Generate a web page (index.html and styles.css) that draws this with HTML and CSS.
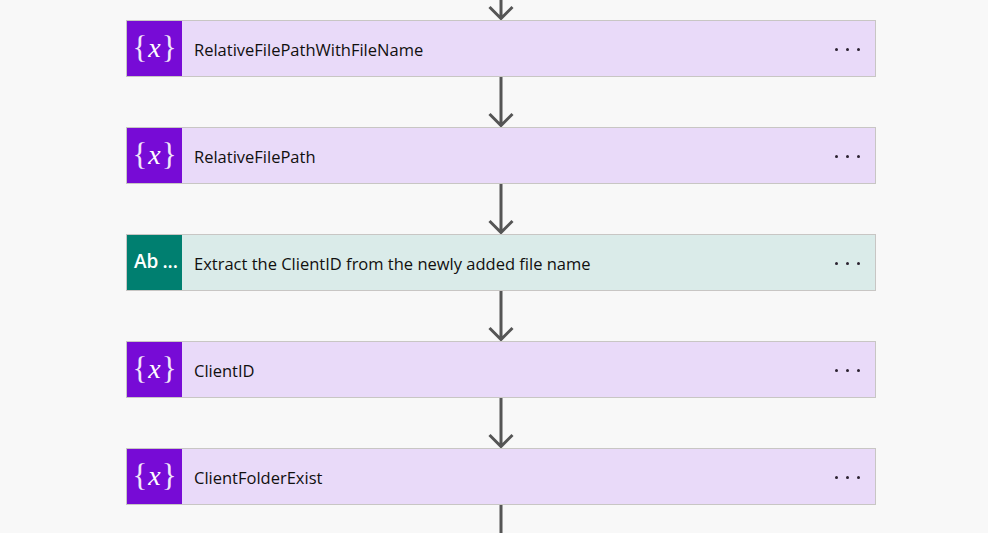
FILE: index.html
```html
<!DOCTYPE html>
<html>
    <head>
        <title>Flow steps</title>
        <link rel="stylesheet" href="styles.css">
    </head>
    <body>
        <div class="flow">
            <svg class="arrow" width="30" height="50" viewBox="0 0 30 50"><path d="M15 0V48M3.500 37L15 48.500L26.500 37"/></svg>

            <div class="card card-var">
                <div class="card-icon"><span class="brace">{</span><span class="var-x">x</span><span class="brace">}</span></div>
                <div class="card-title">RelativeFilePathWithFileName</div>
                <div class="card-menu"><i></i><i></i><i></i></div>
            </div>
            <svg class="arrow" width="30" height="50" viewBox="0 0 30 50"><path d="M15 0V48M3.500 37L15 48.500L26.500 37"/></svg>

            <div class="card card-var">
                <div class="card-icon"><span class="brace">{</span><span class="var-x">x</span><span class="brace">}</span></div>
                <div class="card-title">RelativeFilePath</div>
                <div class="card-menu"><i></i><i></i><i></i></div>
            </div>
            <svg class="arrow" width="30" height="50" viewBox="0 0 30 50"><path d="M15 0V48M3.500 37L15 48.500L26.500 37"/></svg>

            <div class="card card-text">
                <div class="card-icon"><span class="ab">Ab</span><span class="ab-dots">...</span></div>
                <div class="card-title">Extract the ClientID from the newly added file name</div>
                <div class="card-menu"><i></i><i></i><i></i></div>
            </div>
            <svg class="arrow" width="30" height="50" viewBox="0 0 30 50"><path d="M15 0V48M3.500 37L15 48.500L26.500 37"/></svg>

            <div class="card card-var">
                <div class="card-icon"><span class="brace">{</span><span class="var-x">x</span><span class="brace">}</span></div>
                <div class="card-title">ClientID</div>
                <div class="card-menu"><i></i><i></i><i></i></div>
            </div>
            <svg class="arrow" width="30" height="50" viewBox="0 0 30 50"><path d="M15 0V48M3.500 37L15 48.500L26.500 37"/></svg>

            <div class="card card-var">
                <div class="card-icon"><span class="brace">{</span><span class="var-x">x</span><span class="brace">}</span></div>
                <div class="card-title">ClientFolderExist</div>
                <div class="card-menu"><i></i><i></i><i></i></div>
            </div>
            <svg class="arrow" width="30" height="50" viewBox="0 0 30 50"><path d="M15 0V50"/></svg>
        </div>
    </body>
</html>
```

FILE: styles.css
```css
html, body {
    margin: 0;
    height: 100%;
    overflow: hidden;
}

body {
    background-color: #f8f8f8;
    font-family: "Open Sans", sans-serif;
}

.flow {
    display: flex;
    flex-direction: column;
    align-items: flex-start;
    margin-left: 126px;
    margin-top: -30px;
}

.card {
    display: flex;
    align-items: center;
    box-sizing: border-box;
    width: 750px;
    height: 57px;
    border: 1px solid #c8c6c4;
    color: #11100f;
}

.card-var {
    background-color: #e9daf9;
}

.card-text {
    background-color: #daebe9;
}

.card-icon {
    display: flex;
    align-items: center;
    justify-content: center;
    flex: none;
    box-sizing: border-box;
    width: 55px;
    height: 55px;
    color: #fff;
}

.card-var .card-icon {
    background-color: #770bd6;
}

.card-text .card-icon {
    background-color: #007f70;
    padding-left: 3px;
}

.brace {
    font-family: "Liberation Serif", serif;
    font-size: 31px;
    line-height: 1;
    margin-top: -2px;
    opacity: 0.9;
}

.var-x {
    font-family: "Liberation Serif", serif;
    font-style: italic;
    font-size: 28px;
    line-height: 1;
    margin: -2px 1px 0;
}

.ab {
    font-size: 19px;
    font-weight: 600;
    margin-top: -3px;
}

.ab-dots {
    font-size: 19px;
    font-weight: 600;
    margin: -3px 0 0 4px;
}

.card-title {
    flex: 1;
    margin-left: 12px;
    padding-top: 1px;
    font-size: 16.500px;
}

.card-menu {
    display: flex;
    gap: 8px;
    margin-right: 15px;
    margin-top: 1px;
}

.card-menu i {
    display: block;
    width: 3px;
    height: 3px;
    border-radius: 50%;
    background-color: #2b2230;
}

.arrow {
    display: block;
    margin-left: 360px;
}

.arrow path {
    fill: none;
    stroke: #555;
    stroke-width: 3;
}
```
